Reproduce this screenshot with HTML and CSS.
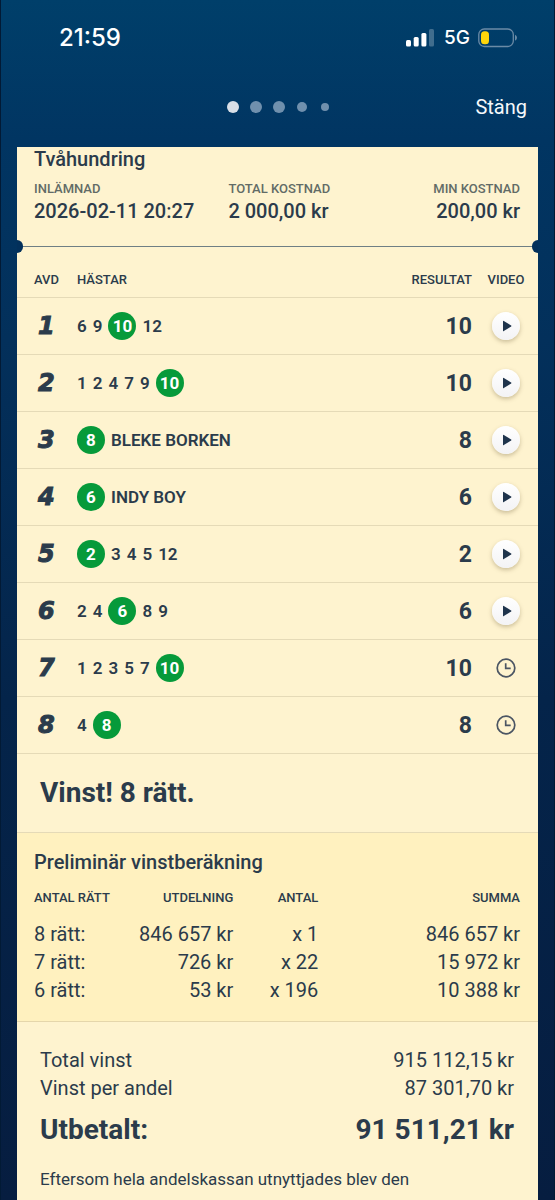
FILE: index.html
```html
<!DOCTYPE html>
<html lang="sv">
<head>
<meta charset="utf-8">
<meta name="viewport" content="width=device-width, initial-scale=1">
<title>Tvåhundring</title>
<link rel="stylesheet" href="styles.css">
</head>
<body>
<svg class="defs" aria-hidden="true">
  <symbol id="play" viewBox="0 0 28 28"><path d="M11 9.3v9.4q0 .9.8.4l7.3-4.6q.7-.5 0-1L11.800 8.900q-.8-.5-.8.4z" fill="#1f344c"/></symbol>
  <symbol id="clock" viewBox="0 0 20 20"><g fill="none" stroke="#4b5563"><circle cx="10" cy="10" r="8.800" stroke-width="1.700"/><path d="M9.700 5.200v5.100h5" stroke-width="1.700"/></g></symbol>
</svg>
<div class="screen">
  <header class="top">
    <div class="status">
      <span class="time">21:59</span>
      <span class="indicators">
        <svg width="28" height="18" viewBox="0 0 28 18" aria-label="Signal"><g fill="#fff"><rect x="0" y="11" width="5" height="6.500" rx="1.500"/><rect x="7.700" y="8" width="5" height="9.500" rx="1.500"/><rect x="15.400" y="4" width="5" height="13.500" rx="1.500"/><rect x="23" y="0" width="5" height="17.500" rx="1.500" opacity=".25"/></g></svg>
        <span class="net">5G</span>
        <svg width="40" height="20" viewBox="0 0 40 20" aria-label="Batteri"><rect x=".8" y="1" width="34.500" height="17.500" rx="5.500" fill="none" stroke="#6b8ba6" stroke-width="1.300"/><path d="M37 6.800q2 .8 2 3t-2 3z" fill="#6b8ba6"/><rect x="3" y="3.200" width="8" height="13" rx="3.500" fill="#ffd60a"/></svg>
      </span>
    </div>
    <nav class="nav">
      <span class="dots"><i class="dot on"></i><i class="dot"></i><i class="dot"></i><i class="dot small"></i><i class="dot tiny"></i></span>
      <button class="close" type="button">Stäng</button>
    </nav>
  </header>
  <main class="card">
    <section class="summary">
      <h1 class="title">Tvåhundring</h1>
      <dl class="costs">
        <div><dt>INLÄMNAD</dt><dd>2026-02-11 20:27</dd></div>
        <div><dt>TOTAL KOSTNAD</dt><dd>2 000,00 kr</dd></div>
        <div class="end"><dt>MIN KOSTNAD</dt><dd>200,00 kr</dd></div>
      </dl>
    </section>
    <table class="legs">
      <thead><tr><th class="leg">AVD</th><th>HÄSTAR</th><th class="result">RESULTAT</th><th class="video">VIDEO</th></tr></thead>
      <tbody>
        <tr><td class="leg">1</td><td><div class="horses"><span>6</span><span>9</span><b>10</b><span>12</span></div></td><td class="result">10</td><td class="video"><button class="play" type="button" aria-label="Spela avdelning 1"><svg><use href="#play"/></svg></button></td></tr>
        <tr><td class="leg">2</td><td><div class="horses"><span>1</span><span>2</span><span>4</span><span>7</span><span>9</span><b>10</b></div></td><td class="result">10</td><td class="video"><button class="play" type="button" aria-label="Spela avdelning 2"><svg><use href="#play"/></svg></button></td></tr>
        <tr><td class="leg">3</td><td><div class="horses"><b>8</b><span>BLEKE BORKEN</span></div></td><td class="result">8</td><td class="video"><button class="play" type="button" aria-label="Spela avdelning 3"><svg><use href="#play"/></svg></button></td></tr>
        <tr><td class="leg">4</td><td><div class="horses"><b>6</b><span>INDY BOY</span></div></td><td class="result">6</td><td class="video"><button class="play" type="button" aria-label="Spela avdelning 4"><svg><use href="#play"/></svg></button></td></tr>
        <tr><td class="leg">5</td><td><div class="horses"><b>2</b><span>3</span><span>4</span><span>5</span><span>12</span></div></td><td class="result">2</td><td class="video"><button class="play" type="button" aria-label="Spela avdelning 5"><svg><use href="#play"/></svg></button></td></tr>
        <tr><td class="leg">6</td><td><div class="horses"><span>2</span><span>4</span><b>6</b><span>8</span><span>9</span></div></td><td class="result">6</td><td class="video"><button class="play" type="button" aria-label="Spela avdelning 6"><svg><use href="#play"/></svg></button></td></tr>
        <tr><td class="leg">7</td><td><div class="horses"><span>1</span><span>2</span><span>3</span><span>5</span><span>7</span><b>10</b></div></td><td class="result">10</td><td class="video"><svg class="clock"><use href="#clock"/></svg></td></tr>
        <tr><td class="leg">8</td><td><div class="horses"><span>4</span><b>8</b></div></td><td class="result">8</td><td class="video"><svg class="clock"><use href="#clock"/></svg></td></tr>
      </tbody>
    </table>
    <h2 class="win">Vinst! 8 rätt.</h2>
    <section class="calc">
      <h3 class="title">Preliminär vinstberäkning</h3>
      <table class="payout">
        <colgroup><col class="c1"><col class="c2"><col class="c3"><col></colgroup>
        <thead><tr><th>ANTAL RÄTT</th><th>UTDELNING</th><th>ANTAL</th><th>SUMMA</th></tr></thead>
        <tbody>
          <tr><td>8 rätt:</td><td>846 657 kr</td><td>x 1</td><td>846 657 kr</td></tr>
          <tr><td>7 rätt:</td><td>726 kr</td><td>x 22</td><td>15 972 kr</td></tr>
          <tr><td>6 rätt:</td><td>53 kr</td><td>x 196</td><td>10 388 kr</td></tr>
        </tbody>
      </table>
    </section>
    <section class="totals">
      <div class="line"><span>Total vinst</span><span>915 112,15 kr</span></div>
      <div class="line"><span>Vinst per andel</span><span>87 301,70 kr</span></div>
      <div class="line paid"><span>Utbetalt:</span><span>91 511,21 kr</span></div>
      <p class="note">Eftersom hela andelskassan utnyttjades blev den</p>
    </section>
  </main>
</div>
</body>
</html>
```
FILE: styles.css
```css
* { box-sizing: border-box; margin: 0; padding: 0; }
body { background: #061d40; color: #2b3b4b; font-family: Roboto, sans-serif; }
button { border: 0; font: inherit; }
.defs { display: none; }

.screen {
  display: flex;
  flex-direction: column;
  min-height: 100vh;
  padding: 0 16px;
  border: solid #021a35;
  border-width: 0 1px;
  background: linear-gradient(#003f6a 0, #013562 140px, #03305b 340px, #04244a 700px, #061d40 1200px);
}
.top { height: 147px; color: #fff; }

.status {
  display: flex;
  align-items: center;
  justify-content: space-between;
  padding: 22px 20px 0 42px;
}
.time { font: 500 24px/32px Inter, sans-serif; }
.indicators { display: flex; align-items: center; }
.net { margin: 0 8px 0 10px; font: 500 19px/32px Inter, sans-serif; }

.nav {
  display: grid;
  grid-template-columns: 1fr auto 1fr;
  align-items: center;
  padding: 37px 11px 0 0;
}
.dots { display: flex; grid-column: 2; align-items: center; gap: 11px; padding-left: 13px; }
.dot { width: 12px; height: 12px; border-radius: 50%; background: #7090ad; }
.dot.on { background: #d9dfe7; }
.dot.small { width: 10px; height: 10px; margin: 0 1px; }
.dot.tiny { width: 8px; height: 8px; margin: 0 2px; }
.close { justify-self: end; background: none; color: #f5f8fb; font-size: 20px; line-height: 32px; }

.card { flex: 1; background: #fef3cf; }
.title { font-size: 20px; font-weight: 500; line-height: 24px; }

.summary { position: relative; padding: 0 18px 23px 17px; border-bottom: 1px solid #6f7f84; }
.summary::before, .summary::after {
  content: "";
  position: absolute;
  bottom: -7px;
  width: 6px;
  height: 13px;
  background: #03305b;
}
.summary::before { left: 0; border-radius: 0 7px 7px 0; }
.summary::after { right: 0; border-radius: 7px 0 0 7px; }
.costs { display: grid; grid-template-columns: 4fr 3fr 3fr; margin-top: 10px; }
.costs dt { color: #626b66; font-size: 13px; font-weight: 500; line-height: 16px; }
.costs dd { margin-top: 2px; font-size: 20px; font-weight: 500; line-height: 24px; }
.end { text-align: right; }

.legs { width: 100%; border-collapse: collapse; table-layout: fixed; }
.legs th { padding: 25px 0 9px; font-size: 13px; font-weight: 500; line-height: 16px; text-align: left; }
.legs td { height: 57px; }
.legs tr { border-bottom: 1px solid #e5dab7; }
.legs .leg { width: 60px; padding-left: 17px; }
.legs td.leg { padding-left: 21px; font: italic bold 24px "DejaVu Sans", sans-serif; -webkit-text-stroke: 1px; }
.legs .result { width: 90px; padding-right: 2px; text-align: right; }
.legs td.result { font-size: 23px; font-weight: 700; }
.legs .video { width: 64px; text-align: center; }
.horses { display: flex; align-items: center; gap: 6px; font-size: 17px; font-weight: 600; line-height: 28px; }
.horses b { width: 28px; border-radius: 50%; background: #069a3a; color: #fff; font-weight: 700; text-align: center; }
.play {
  display: block;
  width: 28px;
  height: 28px;
  margin: 0 auto;
  border-radius: 50%;
  background: linear-gradient(#fff, #f3f3f5);
  box-shadow: 0 2px 4px #8a7b5570;
}
.play svg { display: block; width: 28px; height: 28px; }
.clock { display: block; width: 20px; height: 20px; margin: 0 auto; }

.win { padding: 23px; border-bottom: 1px solid #e5dab7; font-size: 28px; font-weight: 700; line-height: 32px; }

.calc { padding: 17px 18px 17px 17px; border-bottom: 1px solid #e5d6ab; background: #fff1bf; }
.payout { width: 100%; margin-top: 16px; border-collapse: collapse; table-layout: fixed; }
.c1 { width: 100px; }
.c1, .c2 { width: 20.5%; }
.c3 { width: 17.5%; }
.payout th { padding-bottom: 14px; font-size: 13px; font-weight: 500; line-height: 16px; text-align: right; white-space: nowrap; }
.payout td { font-size: 20px; line-height: 28px; text-align: right; white-space: nowrap; }
.payout th:first-child, .payout td:first-child { text-align: left; }

.totals { padding: 24px 24px 0 23px; }
.line { display: flex; justify-content: space-between; font-size: 20px; line-height: 28px; }
.paid { margin-top: 12px; font-size: 28px; font-weight: 700; line-height: 32px; }
.note { margin-top: 21px; font-size: 17px; line-height: 24px; }
```
